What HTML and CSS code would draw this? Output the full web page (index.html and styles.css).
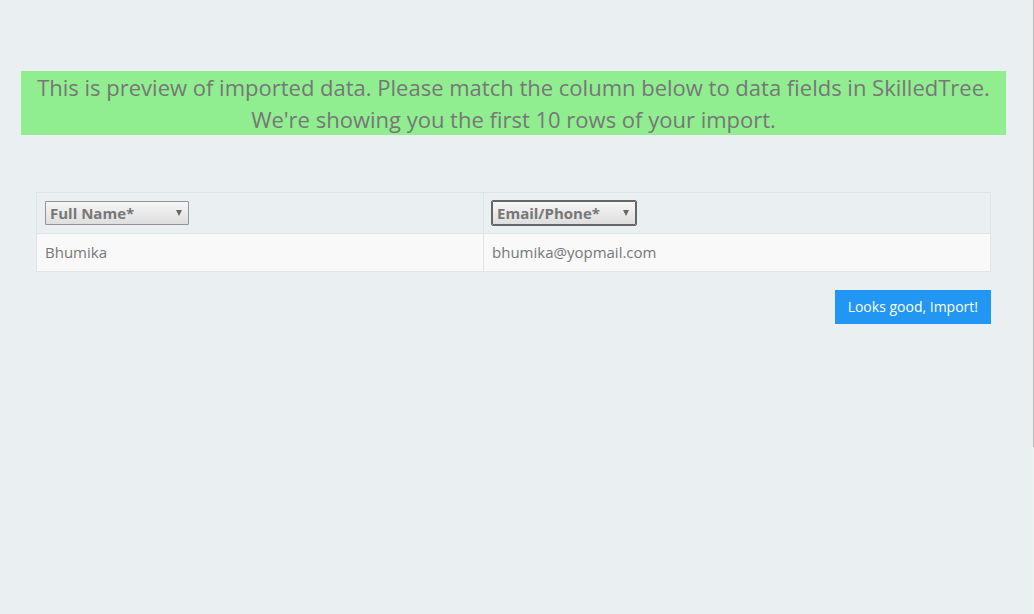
FILE: index.html
```html
<!DOCTYPE html>
<html lang="en">
<head>
<meta charset="utf-8">
<title>Import preview</title>
<link rel="stylesheet" href="styles.css">
</head>
<body>
<div class="scroll-edge"></div>
<main class="page">
  <h1 class="notice">This is preview of imported data. Please match the column below to data fields in SkilledTree. We're showing you the first 10 rows of your import.</h1>
  <form class="import">
    <table class="preview">
      <thead>
        <tr>
          <th class="name-col"><span class="picker"><select class="field" aria-label="Field for column 1"><option>Full Name*</option></select></span></th>
          <th><span class="picker"><select class="field field-active" aria-label="Field for column 2"><option>Email/Phone*</option></select></span></th>
        </tr>
      </thead>
      <tbody>
        <tr><td>Bhumika</td><td>bhumika@yopmail.com</td></tr>
      </tbody>
    </table>
    <div class="actions"><button type="button" class="submit">Looks good, Import!</button></div>
  </form>
</main>
</body>
</html>
```
FILE: styles.css
```css
* { box-sizing: border-box; }
body {
  margin: 0;
  background: #eaeff2;
  color: #777;
  font: 15px/22px "Open Sans", sans-serif;
}
.scroll-edge {
  position: absolute;
  top: 0;
  right: 0;
  bottom: 0;
  width: 1px;
  background: linear-gradient(#bcb8b5 447px, #f1f1f0 447px);
}
.page { padding: 71px 28px 0 21px; }
.notice {
  margin: 0 0 57px;
  background: #90ee90;
  font-size: 22px;
  line-height: 32px;
  font-weight: 400;
  text-align: center;
}
.import { padding: 0 15px; }
.preview {
  width: 100%;
  border-collapse: collapse;
  background: #f9f9f9;
}
.preview thead { background: #eaeff2; }
.preview th,
.preview td {
  border: 1px solid #e2e4e4;
  padding: 8px;
  text-align: left;
}
.preview td { padding: 7px 8px 8px; }
.name-col { width: 447px; }
.picker {
  display: block;
  position: relative;
  width: 144px;
}
.picker::after {
  content: "";
  position: absolute;
  right: 7px;
  top: 9px;
  border: 3px solid transparent;
  border-top: 6px solid #666;
  border-bottom: 0;
  pointer-events: none;
}
.field {
  appearance: none;
  display: block;
  width: 100%;
  height: 24px;
  margin: 0;
  padding: 0 4px;
  border: 1px solid #949494;
  border-radius: 1px;
  background: linear-gradient(#f6f6f6, #dedede);
  color: #777;
  font: 700 15px/22px "Open Sans", sans-serif;
}
.field-active { outline: 1px solid #666; border-color: #666; }
.actions {
  display: flex;
  justify-content: flex-end;
  margin-top: 18px;
}
.submit {
  padding: 6px 13px;
  border: 0;
  background: #2196f3;
  color: #fff;
  font: 14px/22px "Open Sans", sans-serif;
}
```
